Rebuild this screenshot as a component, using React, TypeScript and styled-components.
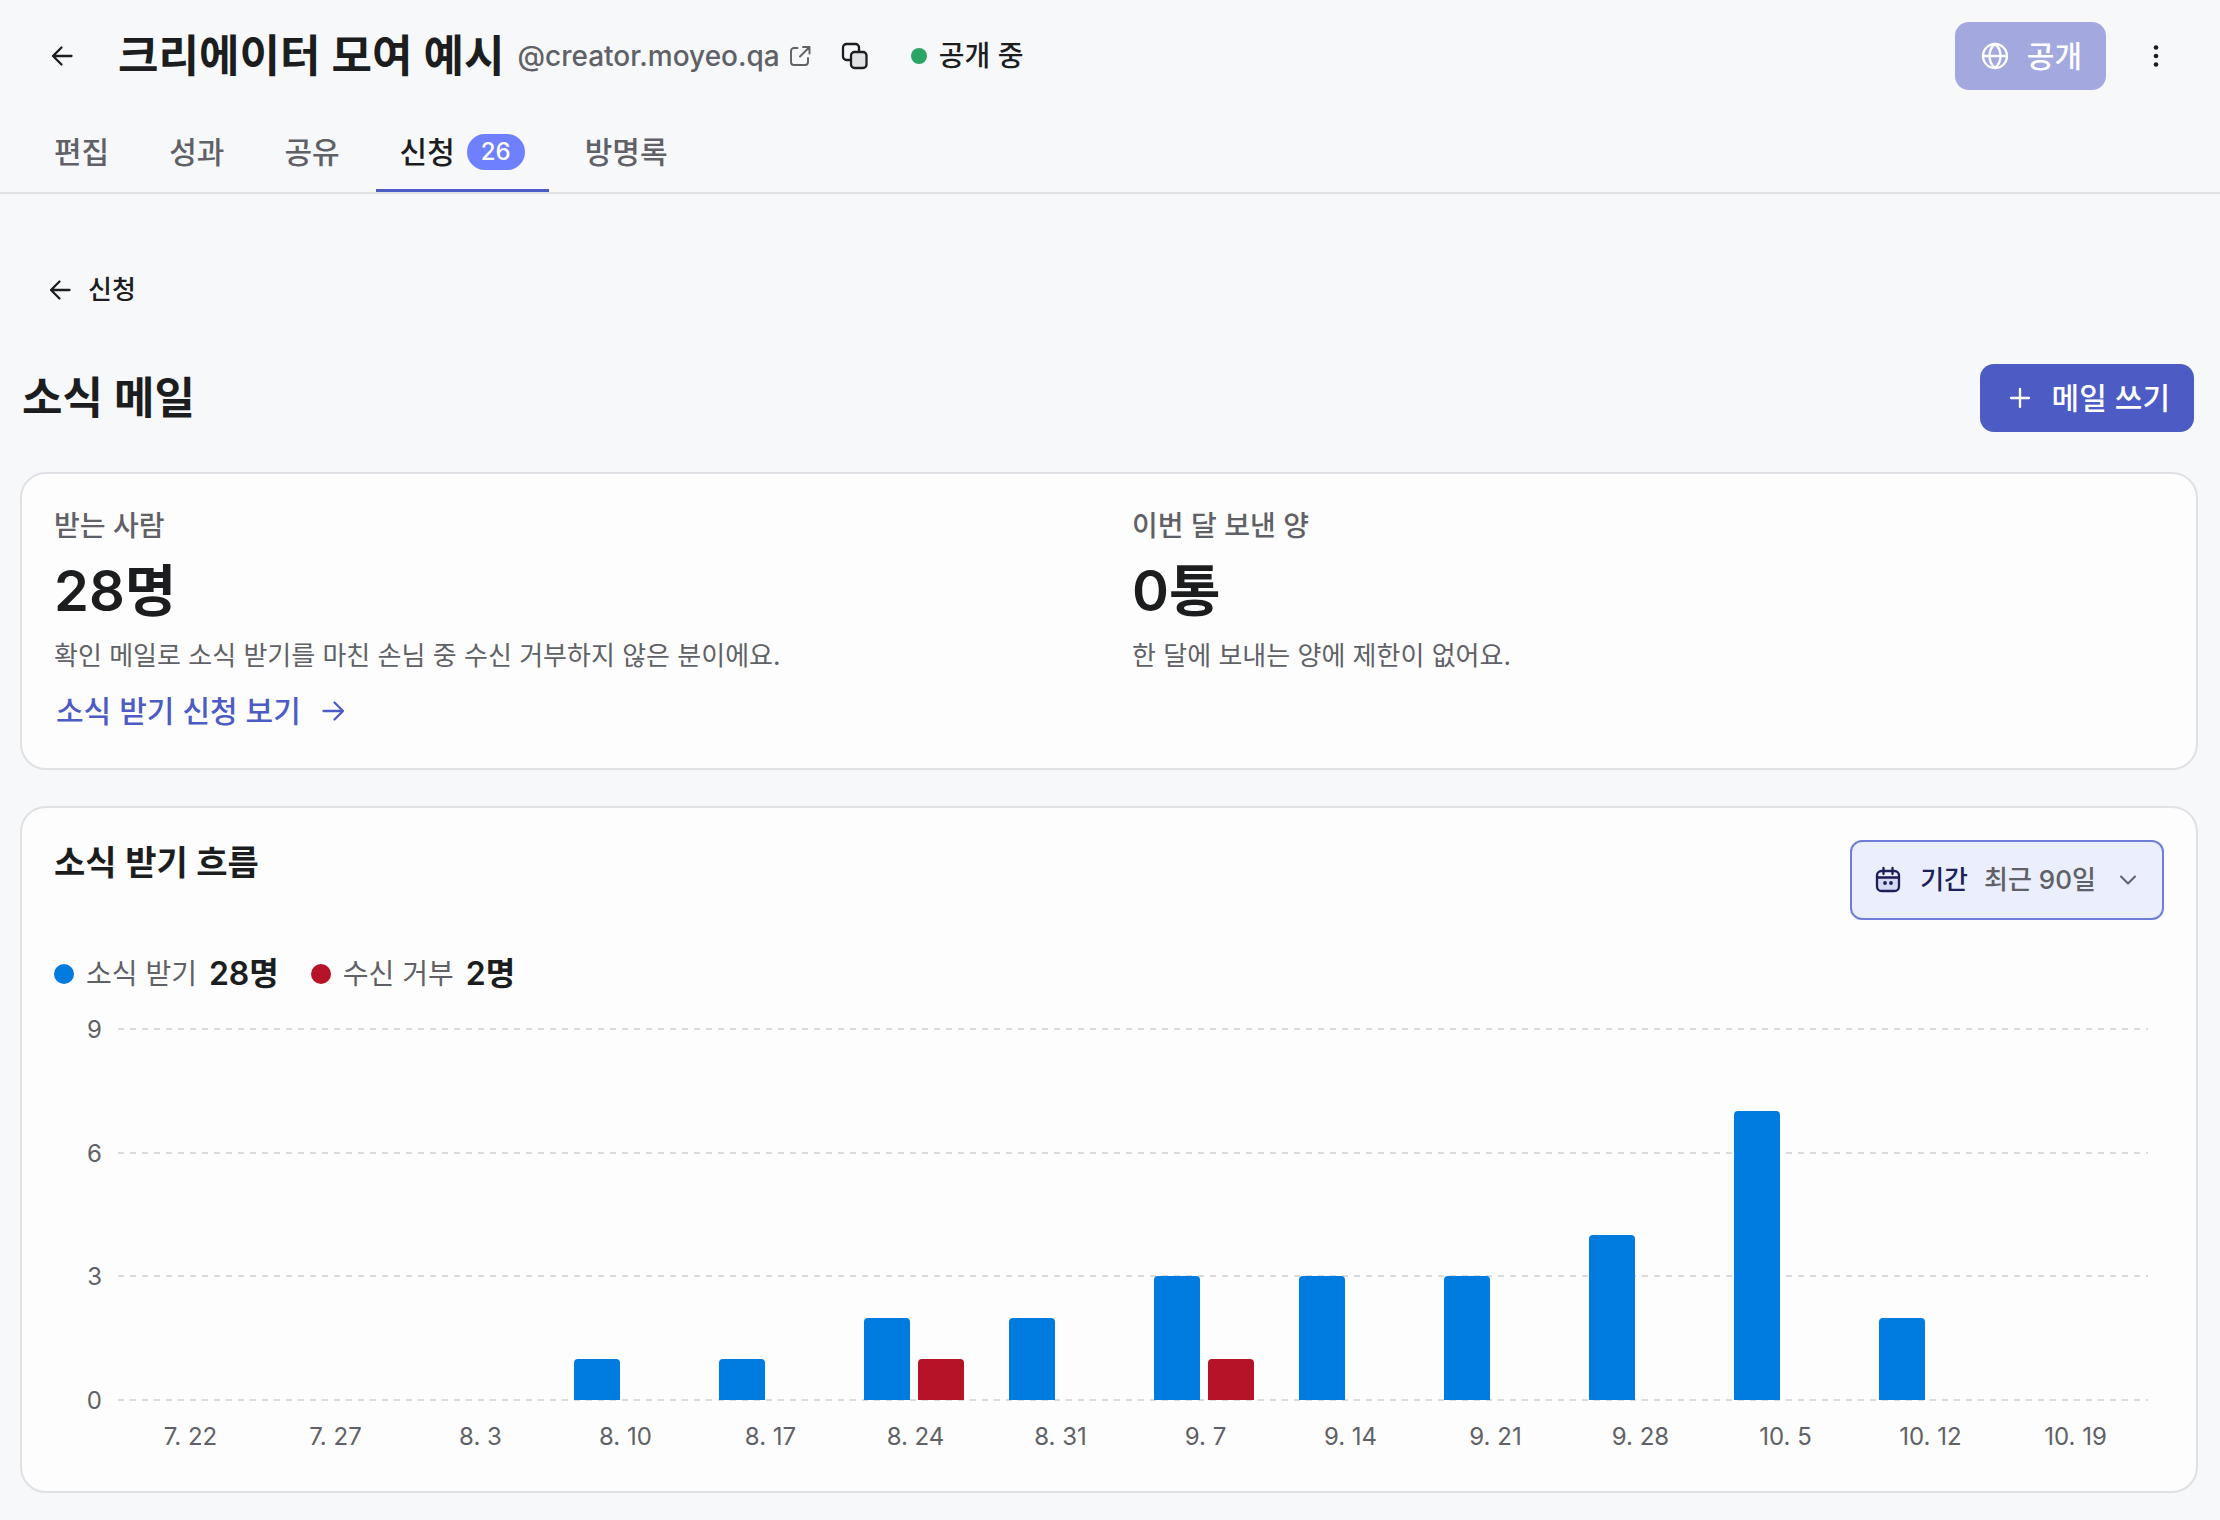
import React from "react";
import styled, { createGlobalStyle } from "styled-components";

const color = {
  page: "#f7f8fa",
  card: "#fdfdfd",
  line: "#dfe1e4",
  grid: "#d9dadc",
  text: "#1c1d1f",
  muted: "#5f6166",
  primary: "#4d5bc4",
  primarySoft: "#a3a9df",
  badge: "#6f80ff",
  blue: "#007be0",
  red: "#b61228",
  green: "#2aa567",
  navy: "#1d1f57",
  fieldBg: "#eaeefd",
  fieldLine: "#6f7edb",
};

const GlobalStyle = createGlobalStyle`
  *, *::before, *::after { box-sizing: border-box; }
  body {
    margin: 0;
    background: ${color.page};
    color: ${color.text};
    font-family: Inter, "Noto Sans CJK KR", sans-serif;
    -webkit-font-smoothing: antialiased;
  }
  h1, h2, h3, p, ul, dl, dt, dd { margin: 0; padding: 0; }
  a { color: inherit; text-decoration: none; }
  button, select { font: inherit; color: inherit; border: 0; background: none; padding: 0; margin: 0; }
  button { cursor: pointer; }
  svg { display: block; flex: none; }
`;

const Header = styled.header`
  border-bottom: 2px solid ${color.line};
`;

const TopBar = styled.div`
  display: flex;
  align-items: center;
  justify-content: space-between;
  padding: 22px 48px 22px 46px;
`;

const Cluster = styled.div<{ $gap: number }>`
  display: flex;
  align-items: center;
  gap: ${(p) => p.$gap}px;
`;

const IconButton = styled.button`
  display: flex;
  align-items: center;
  justify-content: center;
  width: 32px;
  height: 48px;
`;

const SiteTitle = styled.h1`
  margin-left: 40px;
  font-size: 44px;
  line-height: 60px;
  font-weight: 600;
`;

const Handle = styled.a`
  display: flex;
  align-items: center;
  gap: 8px;
  margin: 0 27px 0 13px;
  font-size: 28px;
  line-height: 40px;
  font-weight: 500;
  color: ${color.muted};
`;

const Status = styled.span`
  display: flex;
  align-items: center;
  gap: 12px;
  margin-left: 40px;
  font-size: 28px;
  line-height: 40px;
  font-weight: 500;
`;

const Dot = styled.i<{ $size: number; $color: string }>`
  width: ${(p) => p.$size}px;
  height: ${(p) => p.$size}px;
  border-radius: 50%;
  background: ${(p) => p.$color};
`;

const Button = styled.button`
  display: flex;
  align-items: center;
  gap: 16px;
  height: 68px;
  padding: 0 24px;
  border-radius: 14px;
  background: ${color.primary};
  color: #fff;
  font-size: 30px;
  line-height: 40px;
  font-weight: 500;
  white-space: nowrap;
  &:disabled {
    background: ${color.primarySoft};
    cursor: default;
  }
`;

const Tabs = styled.nav`
  display: flex;
  gap: 12px;
  padding: 0 30px;
`;

const Tab = styled.a<{ $active?: boolean }>`
  display: flex;
  align-items: center;
  gap: 12px;
  height: 80px;
  padding: 0 24px;
  font-size: 30px;
  line-height: 40px;
  font-weight: 500;
  color: ${(p) => (p.$active ? color.text : color.muted)};
  box-shadow: ${(p) => (p.$active ? `inset 0 -3px 0 ${color.primary}` : "none")};
`;

const Badge = styled.span`
  padding: 0 14px;
  border-radius: 18px;
  background: ${color.badge};
  color: #fff;
  font-size: 24px;
  line-height: 36px;
`;

const Main = styled.main`
  padding: 64px 22px 28px 20px;
`;

const BackLink = styled.a`
  display: inline-flex;
  align-items: center;
  gap: 12px;
  height: 64px;
  padding: 0 24px;
  font-size: 26px;
  line-height: 38px;
  font-weight: 500;
`;

const PageHead = styled.div`
  display: flex;
  align-items: center;
  justify-content: space-between;
  margin: 42px 0 40px;
  padding: 0 4px 0 2px;
`;

const PageTitle = styled.h2`
  font-size: 44px;
  line-height: 60px;
  font-weight: 600;
`;

const Card = styled.section`
  margin-top: 36px;
  padding: 32px;
  border: 2px solid ${color.line};
  border-radius: 26px;
  background: ${color.card};
`;

const Stats = styled(Card)`
  display: grid;
  grid-template-columns: 1fr 1fr;
  gap: 46px;
`;

const Stat = styled.div`
  display: flex;
  flex-direction: column;
  align-items: flex-start;
  gap: 10px;
`;

const StatLabel = styled.h3`
  font-size: 28px;
  line-height: 40px;
  font-weight: 500;
  color: ${color.muted};
`;

const StatValue = styled.p`
  font-size: 56px;
  line-height: 70px;
  font-weight: 600;
`;

const StatNote = styled.p`
  font-size: 26px;
  line-height: 40px;
  color: ${color.muted};
`;

const TextLink = styled.a`
  display: flex;
  align-items: center;
  gap: 16px;
  padding-left: 2px;
  font-size: 30px;
  line-height: 50px;
  font-weight: 500;
  color: ${color.primary};
`;

const CardHead = styled.div`
  display: flex;
  align-items: flex-start;
  justify-content: space-between;
`;

const CardTitle = styled.h3`
  font-size: 34px;
  line-height: 46px;
  font-weight: 600;
`;

const Field = styled.div`
  display: flex;
  align-items: center;
  gap: 16px;
  height: 80px;
  padding: 0 22px 0 20px;
  border: 2px solid ${color.fieldLine};
  border-radius: 12px;
  background: ${color.fieldBg};
  font-size: 26px;
  line-height: 36px;
  color: ${color.muted};
`;

const FieldLabel = styled.label`
  display: flex;
  align-items: center;
  gap: 16px;
  font-weight: 500;
  color: ${color.navy};
`;

const Select = styled.select`
  appearance: none;
  outline: 0;
  padding-right: 4px;
  font-weight: 500;
`;

const Legend = styled.dl`
  display: flex;
  gap: 32px;
  margin: 33px 0;
`;

const LegendItem = styled.div`
  display: flex;
  align-items: center;
  gap: 12px;
  font-size: 28px;
  line-height: 42px;
  color: ${color.muted};
  dd {
    font-size: 32px;
    font-weight: 600;
    color: ${color.text};
  }
`;

const Chart = styled.div`
  display: grid;
  grid-template-columns: 48px 1fr;
  gap: 22px 16px;
  padding: 0 16px 8px 0;
  font-size: 24px;
  line-height: 28px;
  color: ${color.muted};
`;

const YAxis = styled.div`
  display: flex;
  flex-direction: column;
  justify-content: space-between;
  margin: -12px 0 -14px;
  text-align: right;
`;

const Plot = styled.div`
  display: grid;
  height: 373px;
  > * { grid-area: 1 / 1; }
`;

const GridLines = styled.div`
  display: flex;
  flex-direction: column;
  justify-content: space-between;
  i {
    height: 2px;
    background: repeating-linear-gradient(to right, ${color.grid} 0 6px, transparent 6px 12px);
  }
`;

const Bands = styled.div`
  display: grid;
  grid-template-columns: repeat(14, 1fr);
`;

const Band = styled.div`
  display: grid;
  grid-template-columns: 46px 46px;
  justify-content: center;
  align-items: end;
  gap: 8px;
  padding: 1px 4px 1px 0;
`;

const Bar = styled.div<{ $color: string }>`
  border-radius: 4px 4px 0 0;
  background: ${(p) => p.$color};
`;

const XAxis = styled(Bands)`
  grid-column: 2;
  text-align: center;
`;

const stroke = {
  fill: "none",
  stroke: "currentColor",
  strokeWidth: 2.3,
  strokeLinecap: "round" as const,
  strokeLinejoin: "round" as const,
};

const ArrowLeft = () => (
  <svg width="32" height="32" viewBox="0 0 32 32" {...stroke} aria-hidden="true">
    <path d="M25.5 16H7M15.5 7.5 7 16l8.5 8.5" />
  </svg>
);

const ArrowRight = () => (
  <svg width="32" height="32" viewBox="0 0 32 32" {...stroke} aria-hidden="true">
    <path d="M6.5 16H26M17.5 7.5 26 16l-8.5 8.5" />
  </svg>
);

const ExternalIcon = () => (
  <svg width="24" height="24" viewBox="0 0 24 24" {...stroke} strokeWidth={1.9} aria-hidden="true">
    <path d="M9.5 4H6a3 3 0 0 0-3 3v11a3 3 0 0 0 3 3h11a3 3 0 0 0 3-3v-4" />
    <path d="M12 12.5 21.5 3M15 3h6.5v6.5" />
  </svg>
);

const CopyIcon = () => (
  <svg width="32" height="32" viewBox="0 0 32 32" {...stroke} aria-hidden="true">
    <path d="M12 20H7.5A3.5 3.5 0 0 1 4 16.5v-9A3.5 3.5 0 0 1 7.5 4h9A3.5 3.5 0 0 1 20 7.5V12" />
    <rect x="12" y="12" width="15.5" height="16" rx="3.5" fill="#e1e2e4" />
  </svg>
);

const GlobeIcon = () => (
  <svg width="32" height="32" viewBox="0 0 32 32" {...stroke} aria-hidden="true">
    <circle cx="16" cy="16" r="12" />
    <path d="M4 16h24M16 4c-4 3.2-5.5 7.5-5.5 12s1.5 8.8 5.5 12c4-3.2 5.5-7.5 5.5-12S20 7.2 16 4Z" />
  </svg>
);

const MoreIcon = () => (
  <svg width="32" height="32" viewBox="0 0 32 32" fill="currentColor" aria-hidden="true">
    <circle cx="16" cy="7.5" r="2.3" />
    <circle cx="16" cy="16" r="2.3" />
    <circle cx="16" cy="24.5" r="2.3" />
  </svg>
);

const PlusIcon = () => (
  <svg width="32" height="32" viewBox="0 0 32 32" {...stroke} aria-hidden="true">
    <path d="M16 7v18M7 16h18" />
  </svg>
);

const CalendarIcon = () => (
  <svg width="32" height="32" viewBox="0 0 32 32" {...stroke} aria-hidden="true">
    <path d="M5 13h22v9.5a4.5 4.5 0 0 1-4.5 4.5h-13A4.5 4.5 0 0 1 5 22.5Z" fill="#d3d9f3" stroke="none" />
    <rect x="5" y="7" width="22" height="20" rx="4.5" />
    <path d="M5 13.5h22M11.5 4v6M20.5 4v6" />
    <circle cx="13" cy="19" r="1.9" fill="currentColor" stroke="none" />
    <circle cx="19" cy="19" r="1.9" fill="currentColor" stroke="none" />
  </svg>
);

const ChevronIcon = () => (
  <svg width="24" height="24" viewBox="0 0 24 24" {...stroke} strokeWidth={2} aria-hidden="true">
    <path d="m5 8.5 7 7 7-7" />
  </svg>
);

const MAX = 9;

const weeks: { label: string; joined: number; left: number }[] = [
  { label: "7. 22", joined: 0, left: 0 },
  { label: "7. 27", joined: 0, left: 0 },
  { label: "8. 3", joined: 0, left: 0 },
  { label: "8. 10", joined: 1, left: 0 },
  { label: "8. 17", joined: 1, left: 0 },
  { label: "8. 24", joined: 2, left: 1 },
  { label: "8. 31", joined: 2, left: 0 },
  { label: "9. 7", joined: 3, left: 1 },
  { label: "9. 14", joined: 3, left: 0 },
  { label: "9. 21", joined: 3, left: 0 },
  { label: "9. 28", joined: 4, left: 0 },
  { label: "10. 5", joined: 7, left: 0 },
  { label: "10. 12", joined: 2, left: 0 },
  { label: "10. 19", joined: 0, left: 0 },
];

const barHeight = (value: number) => ({ height: `${(value / MAX) * 100}%` });

export default function App() {
  return (
    <>
      <GlobalStyle />
      <Header>
        <TopBar>
          <Cluster $gap={0}>
            <IconButton aria-label="뒤로">
              <ArrowLeft />
            </IconButton>
            <SiteTitle>크리에이터 모여 예시</SiteTitle>
            <Handle href="#site">
              @creator.moyeo.qa
              <ExternalIcon />
            </Handle>
            <IconButton aria-label="복사">
              <CopyIcon />
            </IconButton>
            <Status>
              <Dot $size={16} $color={color.green} />
              공개 중
            </Status>
          </Cluster>
          <Cluster $gap={34}>
            <Button disabled>
              <GlobeIcon />
              공개
            </Button>
            <IconButton aria-label="더 보기">
              <MoreIcon />
            </IconButton>
          </Cluster>
        </TopBar>
        <Tabs>
          <Tab href="#edit">편집</Tab>
          <Tab href="#stats">성과</Tab>
          <Tab href="#share">공유</Tab>
          <Tab href="#requests" $active aria-current="page">
            신청
            <Badge>26</Badge>
          </Tab>
          <Tab href="#guestbook">방명록</Tab>
        </Tabs>
      </Header>

      <Main>
        <BackLink href="#requests">
          <ArrowLeft />
          신청
        </BackLink>
        <PageHead>
          <PageTitle>소식 메일</PageTitle>
          <Button>
            <PlusIcon />
            메일 쓰기
          </Button>
        </PageHead>

        <Stats>
          <Stat>
            <StatLabel>받는 사람</StatLabel>
            <StatValue>28명</StatValue>
            <StatNote>확인 메일로 소식 받기를 마친 손님 중 수신 거부하지 않은 분이에요.</StatNote>
            <TextLink href="#subscribers">
              소식 받기 신청 보기
              <ArrowRight />
            </TextLink>
          </Stat>
          <Stat>
            <StatLabel>이번 달 보낸 양</StatLabel>
            <StatValue>0통</StatValue>
            <StatNote>한 달에 보내는 양에 제한이 없어요.</StatNote>
          </Stat>
        </Stats>

        <Card>
          <CardHead>
            <CardTitle>소식 받기 흐름</CardTitle>
            <Field>
              <FieldLabel htmlFor="period">
                <CalendarIcon />
                기간
              </FieldLabel>
              <Select id="period" defaultValue="90">
                <option value="90">최근 90일</option>
              </Select>
              <ChevronIcon />
            </Field>
          </CardHead>
          <Legend>
            <LegendItem>
              <Dot $size={20} $color={color.blue} />
              <dt>소식 받기</dt>
              <dd>28명</dd>
            </LegendItem>
            <LegendItem>
              <Dot $size={20} $color={color.red} />
              <dt>수신 거부</dt>
              <dd>2명</dd>
            </LegendItem>
          </Legend>
          <Chart>
            <YAxis>
              {[9, 6, 3, 0].map((tick) => (
                <span key={tick}>{tick}</span>
              ))}
            </YAxis>
            <Plot>
              <GridLines>
                <i />
                <i />
                <i />
                <i />
              </GridLines>
              <Bands>
                {weeks.map((week) => (
                  <Band key={week.label}>
                    <Bar $color={color.blue} style={barHeight(week.joined)} />
                    <Bar $color={color.red} style={barHeight(week.left)} />
                  </Band>
                ))}
              </Bands>
            </Plot>
            <XAxis>
              {weeks.map((week) => (
                <span key={week.label}>{week.label}</span>
              ))}
            </XAxis>
          </Chart>
        </Card>
      </Main>
    </>
  );
}
